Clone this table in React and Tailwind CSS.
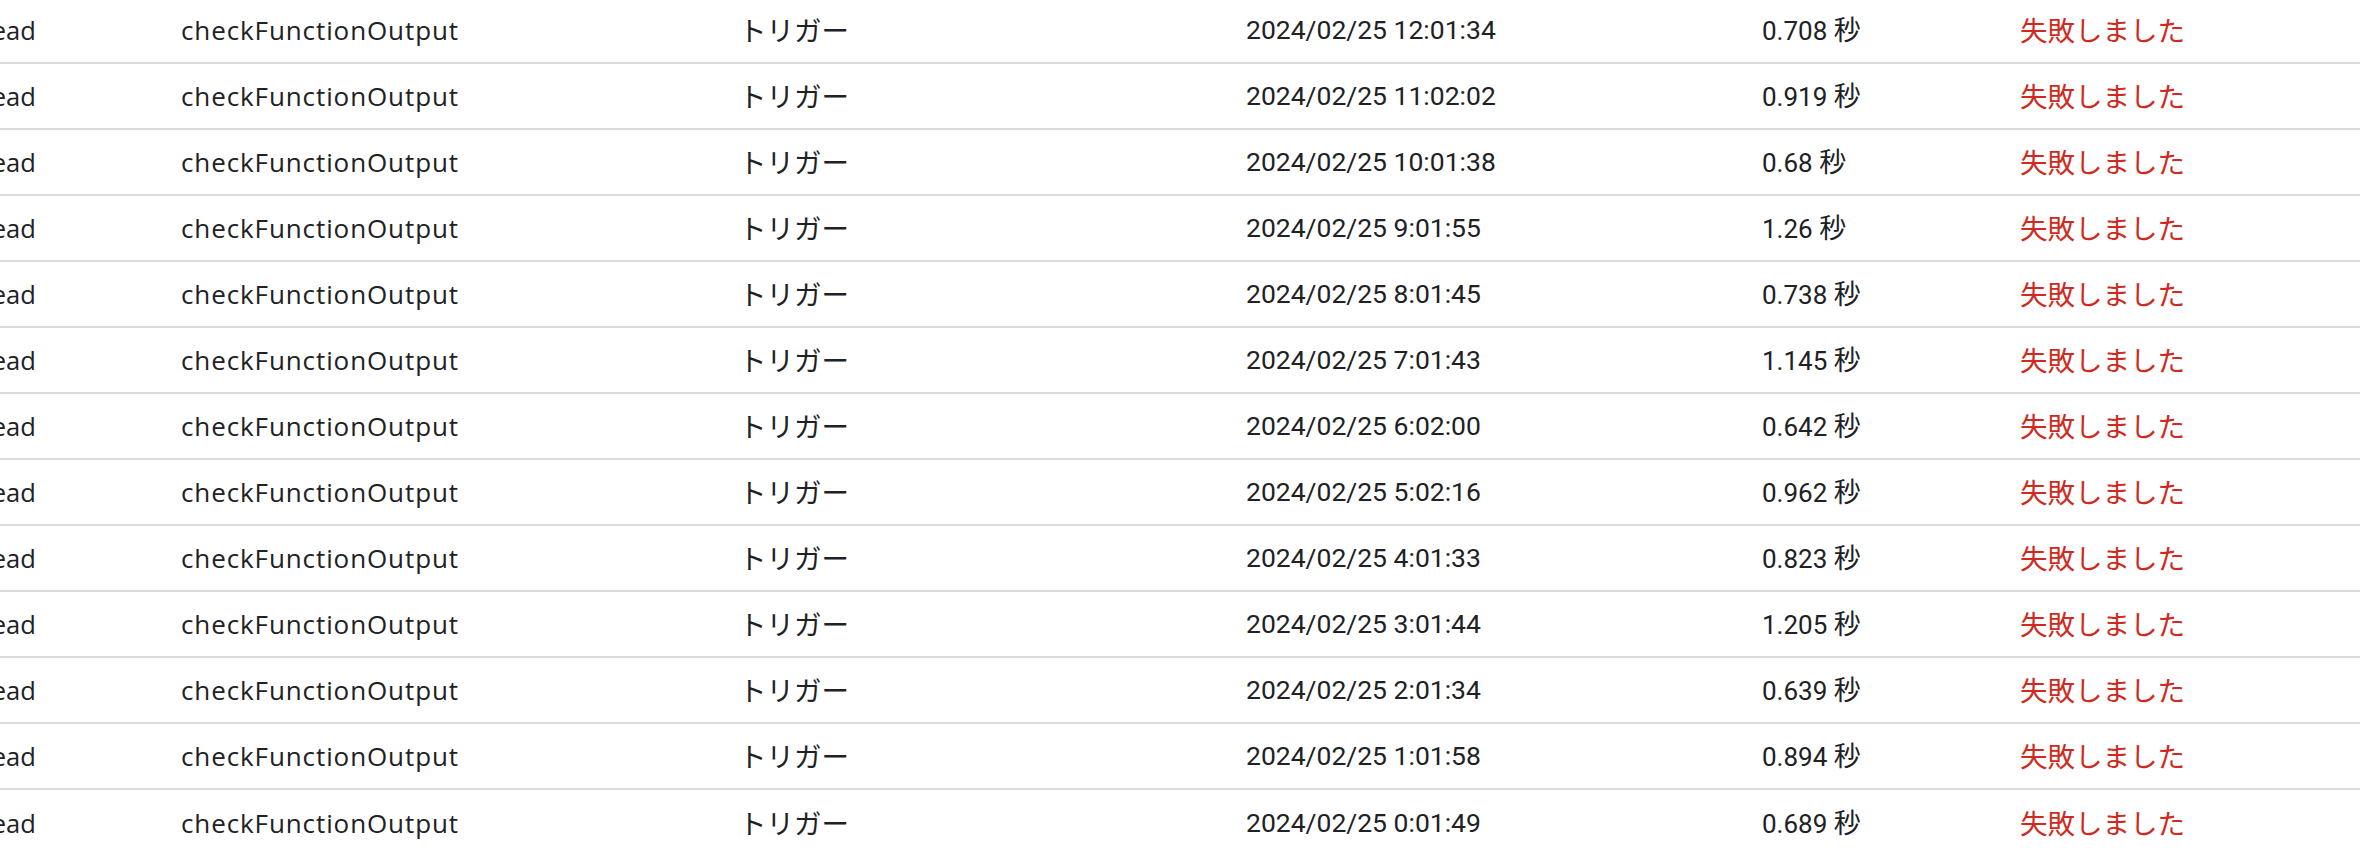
import React from "react";

const rows = [
  ["2024/02/25 12:01:34", "0.708"],
  ["2024/02/25 11:02:02", "0.919"],
  ["2024/02/25 10:01:38", "0.68"],
  ["2024/02/25 9:01:55", "1.26"],
  ["2024/02/25 8:01:45", "0.738"],
  ["2024/02/25 7:01:43", "1.145"],
  ["2024/02/25 6:02:00", "0.642"],
  ["2024/02/25 5:02:16", "0.962"],
  ["2024/02/25 4:01:33", "0.823"],
  ["2024/02/25 3:01:44", "1.205"],
  ["2024/02/25 2:01:34", "0.639"],
  ["2024/02/25 1:01:58", "0.894"],
  ["2024/02/25 0:01:49", "0.689"],
];

export default function App() {
  return (
    <div
      className="w-[2360px] h-[854px] overflow-hidden bg-white text-[#202124] text-[26px]"
      style={{ fontFamily: "Roboto, 'Noto Sans CJK JP', sans-serif" }}
    >
      <div className="-mt-[2px]">
        {rows.map(([date, sec], i) => (
          <div
            key={i}
            className={`flex items-center h-[66px] ${i < rows.length - 1 ? "border-b-2 border-[#dadce0]" : ""}`}
          >
            <div className="w-[181px] shrink-0 overflow-hidden whitespace-nowrap font-['Open_Sans'] text-[25.5px]">
              <span className="inline-block -ml-[27px]">Head</span>
            </div>
            <div className="w-[558px] shrink-0 whitespace-nowrap font-['Open_Sans'] text-[26px] tracking-[0.9px]">
              checkFunctionOutput
            </div>
            <div className="w-[507px] shrink-0 whitespace-nowrap font-['Noto_Sans_CJK_JP'] text-[27.5px]">
              トリガー
            </div>
            <div className="w-[516px] shrink-0 whitespace-nowrap text-[26.5px]">{date}</div>
            <div className="w-[258px] shrink-0 whitespace-nowrap">
              {sec} <span className="font-['Noto_Sans_CJK_JP'] text-[27px]">秒</span>
            </div>
            <div className="flex-1 whitespace-nowrap text-[#cf2a21] font-['Noto_Sans_CJK_JP'] text-[27.5px]">
              失敗しました
            </div>
          </div>
        ))}
      </div>
    </div>
  );
}
